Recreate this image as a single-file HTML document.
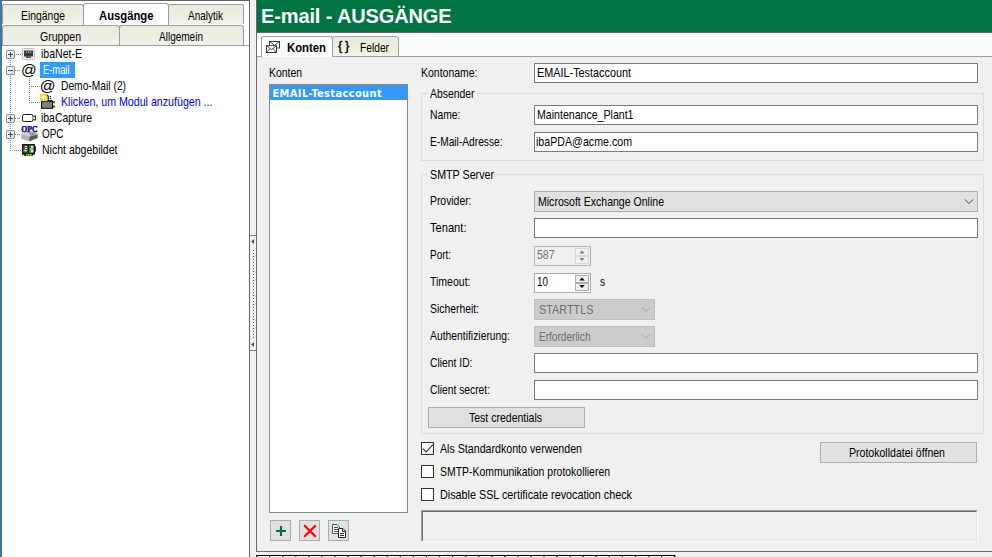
<!DOCTYPE html>
<html lang="de">
<head>
<meta charset="utf-8">
<title>E-mail - AUSGÄNGE</title>
<style>
html,body{margin:0;padding:0;}
body{width:992px;height:557px;overflow:hidden;position:relative;background:#f0f0f0;
  font-family:"Liberation Sans",sans-serif;font-size:11px;color:#000;}
.a{position:absolute;box-sizing:border-box;}
.t{position:absolute;white-space:nowrap;font-size:13px;line-height:15px;height:15px;transform-origin:0 50%;}
.tc{position:absolute;white-space:nowrap;line-height:13px;height:13px;text-align:center;}
.tab{position:absolute;box-sizing:border-box;border:1px solid #9c9e9e;border-bottom:none;border-radius:3px 3px 0 0;
  background:linear-gradient(#ebeadd,#eeede2 50%,#f3f2e9);}
.tab.act{background:#fff;}
.tb{position:absolute;box-sizing:border-box;background:#fff;border:1px solid #7a7a7a;height:20px;}
.cb{position:absolute;box-sizing:border-box;background:#e1e1e1;border:1px solid #adadad;height:21px;}
.cb.dis{background:#cccccc;border-color:#bfbfbf;}
.btn{position:absolute;box-sizing:border-box;background:#e1e1e1;border:1px solid #adadad;}
.grp{position:absolute;box-sizing:border-box;border:1px solid #dcdcdc;}
.chk{position:absolute;box-sizing:border-box;width:13px;height:13px;background:#fff;border:1px solid #333;}
.dotv{position:absolute;width:1px;background-image:linear-gradient(#808080 50%,transparent 50%);background-size:1px 2px;}
.doth{position:absolute;height:1px;background-image:linear-gradient(90deg,#808080 50%,transparent 50%);background-size:2px 1px;}
.exp{position:absolute;box-sizing:border-box;width:9px;height:9px;border:1px solid #919191;border-radius:1px;background:linear-gradient(135deg,#fff,#d8d8d0);}
</style>
</head>
<body>

<!-- ===== LEFT PANEL ===== -->
<div class="a" id="leftpanel" style="left:0;top:0;width:250px;height:557px;background:#fff;"></div>
<div class="a" style="left:0;top:0;width:1px;height:557px;background:#1883d7;"></div>
<div class="a" style="left:1px;top:0;width:1px;height:557px;background:#696969;"></div>
<div class="a" style="left:1px;top:0;width:249px;height:1px;background:#646464;"></div>
<div class="a" style="left:249px;top:0;width:1px;height:557px;background:#696969;"></div>

<!-- tab rows -->
<div class="tab" style="left:2px;top:4px;width:82px;height:20px;"></div>
<div class="tab" style="left:168px;top:4px;width:76px;height:20px;"></div>
<div class="tab" style="left:2px;top:25px;width:118px;height:21px;"></div>
<div class="tab" style="left:119px;top:25px;width:125px;height:21px;"></div>
<div class="tab act" style="left:83px;top:3px;width:86px;height:22px;"></div>
<div class="a" style="left:2px;top:45px;width:247px;height:1px;background:#9c9e9e;"></div>

<!-- tree -->
<div id="tree">
<!-- dotted connector lines -->
<div class="dotv" style="left:10px;top:60px;height:91px;"></div>
<div class="doth" style="left:16px;top:54px;width:6px;"></div>
<div class="doth" style="left:15px;top:70px;width:6px;"></div>
<div class="doth" style="left:15px;top:118px;width:6px;"></div>
<div class="doth" style="left:15px;top:134px;width:6px;"></div>
<div class="doth" style="left:10px;top:150px;width:11px;"></div>
<div class="dotv" style="left:29px;top:78px;height:25px;"></div>
<div class="doth" style="left:29px;top:86px;width:11px;"></div>
<div class="doth" style="left:29px;top:102px;width:11px;"></div>
<!-- expand boxes -->
<div class="exp" style="left:6px;top:50px;"></div>
<div class="a" style="left:8px;top:54px;width:5px;height:1px;background:#2b48a4;"></div>
<div class="a" style="left:10px;top:52px;width:1px;height:5px;background:#2b48a4;"></div>
<div class="exp" style="left:6px;top:66px;"></div>
<div class="a" style="left:8px;top:70px;width:5px;height:1px;background:#2b48a4;"></div>
<div class="exp" style="left:6px;top:114px;"></div>
<div class="a" style="left:8px;top:118px;width:5px;height:1px;background:#2b48a4;"></div>
<div class="a" style="left:10px;top:116px;width:1px;height:5px;background:#2b48a4;"></div>
<div class="exp" style="left:6px;top:130px;"></div>
<div class="a" style="left:8px;top:134px;width:5px;height:1px;background:#2b48a4;"></div>
<div class="a" style="left:10px;top:132px;width:1px;height:5px;background:#2b48a4;"></div>
<!-- selection -->
<div class="a" style="left:40px;top:62px;width:35px;height:16px;background:#3399ff;"></div>
<!-- icons -->
<svg class="a" style="left:22px;top:48px;" width="13" height="12" viewBox="0 0 13 12">
  <rect x="0.5" y="0.5" width="12" height="11" rx="1" fill="#ececf4" stroke="#c4c4c4"/>
  <rect x="2" y="2.5" width="9" height="6" fill="#3c3c3c"/>
  <rect x="4" y="8.5" width="5" height="1.5" fill="#4a4a4a"/>
  <rect x="4.2" y="3.3" width="1" height="1.8" fill="#c9a94a"/><rect x="6.2" y="3.3" width="1" height="1.8" fill="#c9a94a"/><rect x="8.2" y="3.3" width="1" height="1.8" fill="#c9a94a"/>
</svg>
<div class="a" style="left:21px;top:60px;width:16px;height:20px;line-height:20px;font-size:15.5px;">@</div>
<div class="a" style="left:39.7px;top:76px;width:16px;height:20px;line-height:20px;font-size:15.5px;">@</div>
<svg class="a" style="left:40px;top:94px;" width="16" height="15" viewBox="0 0 16 15">
  <rect x="1.6" y="7.2" width="10.9" height="7.1" fill="#808080" stroke="#050505" stroke-width="1"/>
  <path d="M6.8 0.8 L8.2 2.2 V7" stroke="#050505" stroke-width="1.1" fill="none"/>
  <path d="M8.2 6.7 H12.3" stroke="#050505" stroke-width="1" fill="none"/>
  <rect x="9.9" y="1.9" width="1.1" height="1.1" fill="#050505"/><rect x="9.9" y="4" width="1.1" height="1.1" fill="#050505"/>
  <rect x="13" y="7.2" width="2" height="2.3" fill="#0b8c0b"/><rect x="13" y="11.2" width="2" height="2.6" fill="#0b8c0b"/>
  <rect x="13" y="9.5" width="2" height="1.7" fill="#fff"/>
  <rect x="0" y="0" width="7" height="7" fill="#f6cd45"/>
  <path d="M3.5 0.3 V6.7 M0.3 3.5 H6.7" stroke="#fff1b5" stroke-width="1.1"/>
  <path d="M1.2 1.2 L5.8 5.8 M5.8 1.2 L1.2 5.8" stroke="#fbe08a" stroke-width="0.9"/>
  <rect x="2.4" y="2.4" width="2.2" height="2.2" fill="#fffef2"/>
</svg>
<svg class="a" style="left:21px;top:113px;" width="16" height="10" viewBox="0 0 16 10">
  <rect x="1.5" y="1.5" width="10.5" height="7" rx="1.6" fill="#fff" stroke="#1a1a1a" stroke-width="1"/>
  <path d="M12.3 3.6 L14.4 2.8 V7.2 L12.3 6.4" fill="#fff" stroke="#1a1a1a" stroke-width="1"/>
</svg>
<svg class="a" style="left:21px;top:126px;" width="17" height="16" viewBox="0 0 17 16">
  <path d="M0.5 8.5 L3 5 H14.5 L16.5 8.5 V12 L8.5 15.2 L0.5 12.5 Z" fill="#9a9a9a"/>
  <path d="M0.5 8.5 L3 5 H14.5 L16.5 8.5 L8.5 10.8 Z" fill="#cfcfcf"/>
  <path d="M0.5 8.5 L8.5 10.8 V15.2 L0.5 12.5 Z" fill="#b0b0b0"/>
  <path d="M8.5 10.8 L16.5 8.5 V12 L8.5 15.2 Z" fill="#5e5e5e"/>
  <path d="M8 6.5 H13.5 L15 9 L9.5 10.2 Z" fill="#8f9f8f"/>
  <rect x="11" y="7.6" width="1.2" height="1.2" fill="#2fae2f"/>
  <text x="0.2" y="5.8" font-family="Liberation Serif,serif" font-weight="bold" font-size="7.4" fill="#1b0a8c" stroke="#1b0a8c" stroke-width="0.45" textLength="16.3" lengthAdjust="spacingAndGlyphs">OPC</text>
</svg>
<svg class="a" style="left:22px;top:144px;" width="15" height="13" viewBox="0 0 15 13">
  <rect x="0.7" y="0.7" width="11.6" height="9.4" fill="#0f6e0f" stroke="#050505" stroke-width="1.2"/>
  <rect x="12.6" y="2.2" width="1.3" height="5.6" fill="#222"/>
  <rect x="2.2" y="9.6" width="8.6" height="2.2" fill="#050505"/>
  <rect x="4.2" y="10" width="1.4" height="1.5" fill="#f0e820"/><rect x="6.1" y="10" width="1.4" height="1.5" fill="#f0e820"/><rect x="8" y="10" width="1.4" height="1.5" fill="#f0e820"/>
  <rect x="1.3" y="2" width="1.4" height="1.1" fill="#f02020"/><rect x="1.3" y="4.1" width="1.4" height="1.1" fill="#f02020"/>
  <rect x="2.8" y="2" width="2.4" height="1.1" fill="#f4f4f4"/><rect x="2.8" y="4.1" width="2.4" height="1.1" fill="#f4f4f4"/><rect x="1.6" y="6.2" width="3.6" height="1.1" fill="#f4f4f4"/>
  <rect x="5.8" y="1.3" width="1" height="8.2" fill="#050505"/>
  <rect x="7.2" y="1.3" width="1.3" height="1.3" fill="#25e025"/>
  <rect x="9" y="1.8" width="2.4" height="2" fill="#f4f4f4"/><rect x="7.6" y="4.4" width="3.8" height="1.4" fill="#e0e0e0"/><rect x="8.6" y="6.2" width="2.8" height="2.2" fill="#f4f4f4"/>
  <rect x="7.2" y="6.4" width="1" height="2.6" fill="#25a025"/>
</svg>
</div>

<!-- ===== SPLITTER ===== -->
<div class="a" style="left:250px;top:0;width:6px;height:557px;background:#f0f0f0;"></div>
<div class="a" style="left:256px;top:0;width:1px;height:552px;background:#696969;"></div>

<!-- ===== RIGHT PANEL ===== -->
<div class="a" style="left:257px;top:0;width:735px;height:32px;background:#007342;"></div>
<div class="a" id="title" style="white-space:nowrap;left:261px;top:4px;height:24px;line-height:24px;font-size:20px;font-weight:bold;color:#fff;letter-spacing:-0.125px;">E-mail - AUSGÄNGE</div>
<div class="a" style="left:257px;top:32px;width:735px;height:1px;background:#696969;"></div>
<div class="a" style="left:257px;top:33px;width:735px;height:24px;background:#fcfcfc;border-top:1px solid #fff;"></div>


<!-- tab headers -->
<div class="a" style="left:257px;top:56px;width:735px;height:1px;background:#a0a0a0;"></div>
<div class="tab" style="left:332px;top:36px;width:67px;height:21px;border-color:#a0a0a0;border-bottom:1px solid #a0a0a0;"></div>
<div class="tab act" style="left:261px;top:36px;width:72px;height:21px;border-color:#a0a0a0;background:#fcfcfc;"></div>
<!-- tab page -->
<div class="a" style="left:257px;top:57px;width:735px;height:494px;background:#f0f0f0;"></div>
<div class="a" style="left:257px;top:551px;width:735px;height:1px;background:#6b6b6b;"></div>

<!-- listbox -->
<div class="a" style="left:269px;top:84px;width:139px;height:429px;background:#fff;border:1px solid #828790;"></div>
<div class="a" style="left:270px;top:85px;width:137px;height:15px;background:#3399ff;"></div>

<!-- list buttons -->
<div class="btn" style="left:270px;top:520px;width:21px;height:21px;"></div>
<div class="btn" style="left:299px;top:520px;width:21px;height:21px;"></div>
<div class="btn" style="left:328px;top:520px;width:21px;height:21px;"></div>

<!-- Kontoname -->
<div class="tb" style="left:534px;top:63px;width:444px;"></div>

<!-- group Absender -->
<div class="grp" style="left:421px;top:93px;width:563px;height:68px;"></div>
<div class="a" style="left:428px;top:88px;width:49px;height:12px;background:#f0f0f0;"></div>
<div class="tb" style="left:534px;top:105px;width:444px;"></div>
<div class="tb" style="left:534px;top:132px;width:444px;"></div>

<!-- group SMTP -->
<div class="grp" style="left:421px;top:174px;width:563px;height:260px;"></div>
<div class="a" style="left:428px;top:169px;width:68px;height:12px;background:#f0f0f0;"></div>
<div class="cb" style="left:534px;top:191px;width:444px;"></div>
<div class="tb" style="left:534px;top:218px;width:444px;"></div>
<div class="tb" style="left:534px;top:246px;width:57px;background:#f0f0f0;border-color:#b4b5ba;"></div>
<div class="tb" style="left:534px;top:273px;width:57px;border-color:#abadb3;"></div>
<div class="cb dis" style="left:534px;top:299px;width:121px;"></div>
<div class="cb dis" style="left:534px;top:326px;width:121px;"></div>
<div class="tb" style="left:534px;top:353px;width:444px;"></div>
<div class="tb" style="left:534px;top:380px;width:444px;"></div>
<div class="btn" style="left:428px;top:407px;width:157px;height:21px;"></div>

<!-- checkboxes -->
<div class="chk" style="left:421px;top:442px;"></div>
<div class="chk" style="left:421px;top:465px;"></div>
<div class="chk" style="left:421px;top:488px;"></div>

<div class="btn" style="left:820px;top:442px;width:157px;height:21px;"></div>

<!-- sunken panel -->
<div class="a" style="left:421px;top:510px;width:557px;height:32px;border-top:1px solid #a0a0a0;border-left:1px solid #a0a0a0;border-right:1px solid #fff;border-bottom:1px solid #fff;"></div>
<div class="a" style="left:422px;top:511px;width:555px;height:30px;border-top:1px solid #696969;border-left:1px solid #696969;border-right:1px solid #e3e3e3;border-bottom:1px solid #e3e3e3;"></div>


<!-- splitter handle -->
<div class="a" style="left:250px;top:235px;width:6px;height:1px;background:#808080;"></div>
<div class="a" style="left:250px;top:350px;width:6px;height:1px;background:#808080;"></div>
<svg class="a" style="left:250px;top:236px;" width="6" height="114" viewBox="0 0 6 114">
  <path d="M4 3 L4 8 L1.2 5.5 Z" fill="#505050"/>
  <path d="M4 106 L4 111 L1.2 108.5 Z" fill="#505050"/>
  <path d="M3.5 14 V103" stroke="#505050" stroke-width="1" stroke-dasharray="1 2"/>
</svg>

<!-- tab icons -->
<svg class="a" style="left:265px;top:40px;" width="16" height="14" viewBox="0 0 16 14">
  <rect x="4.5" y="1.5" width="10" height="6.5" fill="#fff" stroke="#2a2a2a" stroke-width="0.9"/>
  <path d="M4.5 1.5 L9.5 5.2 L14.5 1.5" fill="none" stroke="#2a2a2a" stroke-width="0.8"/>
  <rect x="1.5" y="5.7" width="10" height="6.8" fill="#fff" stroke="#2a2a2a" stroke-width="0.9"/>
  <path d="M1.5 5.7 L6.5 9.6 L11.5 5.7 M1.5 12.5 L5 8.6 M11.5 12.5 L8 8.6" fill="none" stroke="#2a2a2a" stroke-width="0.8"/>
</svg>
<div class="a" style="left:337px;top:38px;width:16px;height:16px;line-height:16px;font-size:13px;font-weight:normal;-webkit-text-stroke:0.35px #000;text-align:center;letter-spacing:2.6px;white-space:nowrap;">{}</div>

<!-- combo chevrons -->
<svg class="a" style="left:964px;top:198px;" width="10" height="7" viewBox="0 0 10 7"><path d="M1 1.5 L5 5.5 L9 1.5" fill="none" stroke="#404040" stroke-width="0.95"/></svg>
<svg class="a" style="left:641px;top:306px;" width="10" height="7" viewBox="0 0 10 7"><path d="M1 1.5 L5 5.5 L9 1.5" fill="none" stroke="#a0a0a0" stroke-width="1"/></svg>
<svg class="a" style="left:641px;top:333px;" width="10" height="7" viewBox="0 0 10 7"><path d="M1 1.5 L5 5.5 L9 1.5" fill="none" stroke="#a0a0a0" stroke-width="1"/></svg>

<!-- spinner buttons -->
<div class="a" style="left:575px;top:248px;width:14px;height:8px;background:#f0f0f0;border:1px solid #d9d9d9;"></div>
<div class="a" style="left:575px;top:256px;width:14px;height:8px;background:#f0f0f0;border:1px solid #d9d9d9;"></div>
<svg class="a" style="left:579px;top:250px;" width="6" height="12" viewBox="0 0 6 12"><path d="M0.2 3.5 L3 0.5 L5.8 3.5 Z M0.2 8 L3 11 L5.8 8 Z" fill="#808080"/></svg>
<div class="a" style="left:575px;top:275px;width:14px;height:8px;background:#f0f0f0;border:1px solid #adadad;"></div>
<div class="a" style="left:575px;top:283px;width:14px;height:8px;background:#f0f0f0;border:1px solid #adadad;"></div>
<svg class="a" style="left:579px;top:277px;" width="6" height="12" viewBox="0 0 6 12"><path d="M0.2 3.5 L3 0.5 L5.8 3.5 Z M0.2 8 L3 11 L5.8 8 Z" fill="#000"/></svg>

<!-- check mark -->
<svg class="a" style="left:421px;top:442px;" width="13" height="13" viewBox="0 0 13 13"><path d="M2 6.6 L5.1 10 L12 2.6" fill="none" stroke="#333" stroke-width="1.1"/></svg>

<!-- list button icons -->
<svg class="a" style="left:270px;top:520px;" width="21" height="21" viewBox="0 0 21 21"><path d="M6 11 H16 M11 6 V16" stroke="#00703c" stroke-width="2.2"/></svg>
<svg class="a" style="left:299px;top:520px;" width="21" height="21" viewBox="0 0 21 21"><path d="M5.2 5.2 L16.8 16.8 M16.8 5.2 L5.2 16.8" stroke="#ff0000" stroke-width="2.2"/></svg>
<svg class="a" style="left:328px;top:520px;" width="21" height="21" viewBox="0 0 21 21">
  <path d="M4.5 4.5 H9 L11.5 7 V13.5 H4.5 Z" fill="#fff" stroke="#0e7a45"/>
  <path d="M6 7.5 H10 M6 9.5 H10 M6 11.5 H10" stroke="#0e7a45"/>
  <path d="M10.5 8.5 H15 L17.5 11 V17.5 H10.5 Z" fill="#fff" stroke="#222"/>
  <path d="M14.5 8.5 V11.5 H17.5" fill="none" stroke="#222"/>
  <path d="M12 13.5 H16 M12 15.5 H16" stroke="#222"/>
</svg>

<!-- bottom ruler fragment -->
<div class="a" style="left:256px;top:555px;width:419px;height:2px;background:#fff;"></div>
<div class="a" style="left:256px;top:555px;width:419px;height:1px;background:#000;"></div>
<svg class="a" style="left:256px;top:555px;" width="420" height="2" viewBox="0 0 420 2"><path d="M0.65 0 V2 M13.71 0 V2 M26.77 0 V2 M39.84 0 V2 M52.90 0 V2 M65.96 0 V2 M79.03 0 V2 M92.09 0 V2 M105.15 0 V2 M118.21 0 V2 M131.28 0 V2 M144.34 0 V2 M157.40 0 V2 M170.46 0 V2 M183.53 0 V2 M196.59 0 V2 M209.65 0 V2 M222.71 0 V2 M235.78 0 V2 M248.84 0 V2 M261.90 0 V2 M274.96 0 V2 M288.02 0 V2 M301.09 0 V2 M314.15 0 V2 M327.21 0 V2 M340.27 0 V2 M353.34 0 V2 M366.40 0 V2 M379.46 0 V2 M392.52 0 V2 M405.59 0 V2 M418.65 0 V2" stroke="#000" stroke-width="1.3"/></svg>

<!-- ===== TEXT LABELS ===== -->
<div class="t" style="left:41.25px;top:46px;transform:scaleX(0.8106);">ibaNet-E</div>
<div class="t" style="left:42.5px;top:62px;transform:scaleX(0.7193);color:#fff;">E-mail</div>
<div class="t" style="left:61.25px;top:78px;transform:scaleX(0.7894);">Demo-Mail (2)</div>
<div class="t" style="left:61px;top:94px;transform:scaleX(0.8189);color:#0000ff;">Klicken, um Modul anzufügen ...</div>
<div class="t" style="left:41.25px;top:110px;transform:scaleX(0.8018);">ibaCapture</div>
<div class="t" style="left:41.5px;top:126px;transform:scaleX(0.7632);">OPC</div>
<div class="t" style="left:42px;top:142px;transform:scaleX(0.8098);">Nicht abgebildet</div>
<div class="t" style="left:286.5px;top:40px;transform:scaleX(0.8709);font-weight:bold;">Konten</div>
<div class="t" style="left:360.3px;top:40px;transform:scaleX(0.7868);">Felder</div>
<div class="t" style="left:268.8px;top:65px;transform:scaleX(0.8009);">Konten</div>
<div class="t" style="font-size:11px;line-height:13px;height:13px;left:272.5px;top:87px;letter-spacing:0.358px;font-weight:bold;color:#fff;font-family:'DejaVu Sans Condensed','DejaVu Sans',sans-serif;">EMAIL-Testaccount</div>
<div class="t" style="left:420.7px;top:65px;transform:scaleX(0.8059);">Kontoname:</div>
<div class="t" style="left:537px;top:65px;transform:scaleX(0.8339);">EMAIL-Testaccount</div>
<div class="t" style="left:430px;top:86px;transform:scaleX(0.7996);">Absender</div>
<div class="t" style="left:430px;top:107px;transform:scaleX(0.7964);">Name:</div>
<div class="t" style="left:537px;top:107px;transform:scaleX(0.8141);">Maintenance_Plant1</div>
<div class="t" style="left:430px;top:134px;transform:scaleX(0.7840);">E-Mail-Adresse:</div>
<div class="t" style="left:536px;top:134px;transform:scaleX(0.8188);">ibaPDA@acme.com</div>
<div class="t" style="left:430px;top:167px;transform:scaleX(0.8228);">SMTP Server</div>
<div class="t" style="left:430px;top:193px;transform:scaleX(0.7976);">Provider:</div>
<div class="t" style="left:538px;top:194px;transform:scaleX(0.8110);">Microsoft Exchange Online</div>
<div class="t" style="left:430px;top:220px;transform:scaleX(0.8557);">Tenant:</div>
<div class="t" style="left:430px;top:247px;transform:scaleX(0.7645);">Port:</div>
<div class="t" style="left:536.5px;top:247px;transform:scaleX(0.8063);color:#6d6d6d;">587</div>
<div class="t" style="left:430px;top:274px;transform:scaleX(0.8085);">Timeout:</div>
<div class="t" style="left:537px;top:274px;transform:scaleX(0.7603);">10</div>
<div class="t" style="left:599.5px;top:274px;transform:scaleX(0.7692);">s</div>
<div class="t" style="left:430px;top:301px;transform:scaleX(0.7978);">Sicherheit:</div>
<div class="t" style="left:538.5px;top:302px;transform:scaleX(0.8350);color:#6d6d6d;">STARTTLS</div>
<div class="t" style="left:430px;top:328px;transform:scaleX(0.7964);">Authentifizierung:</div>
<div class="t" style="left:538.5px;top:329px;transform:scaleX(0.7748);color:#6d6d6d;">Erforderlich</div>
<div class="t" style="left:430px;top:355px;transform:scaleX(0.7949);">Client ID:</div>
<div class="t" style="left:430px;top:382px;transform:scaleX(0.7908);">Client secret:</div>
<div class="t" style="left:468.75px;top:410px;transform:scaleX(0.8082);">Test credentials</div>
<div class="t" style="left:440px;top:441px;transform:scaleX(0.8187);">Als Standardkonto verwenden</div>
<div class="t" style="left:440px;top:464px;transform:scaleX(0.8030);">SMTP-Kommunikation protokollieren</div>
<div class="t" style="left:440px;top:487px;transform:scaleX(0.8295);">Disable SSL certificate revocation check</div>
<div class="t" style="left:849px;top:445px;transform:scaleX(0.8115);">Protokolldatei öffnen</div>
<div class="t" style="left:20.5px;top:8px;transform:scaleX(0.8007);">Eingänge</div>
<div class="t" style="left:98.5px;top:8px;transform:scaleX(0.8672);font-weight:bold;">Ausgänge</div>
<div class="t" style="left:187.5px;top:8px;transform:scaleX(0.7687);">Analytik</div>
<div class="t" style="left:39.5px;top:29px;transform:scaleX(0.8104);">Gruppen</div>
<div class="t" style="left:159px;top:29px;transform:scaleX(0.7707);">Allgemein</div>
</body>
</html>
